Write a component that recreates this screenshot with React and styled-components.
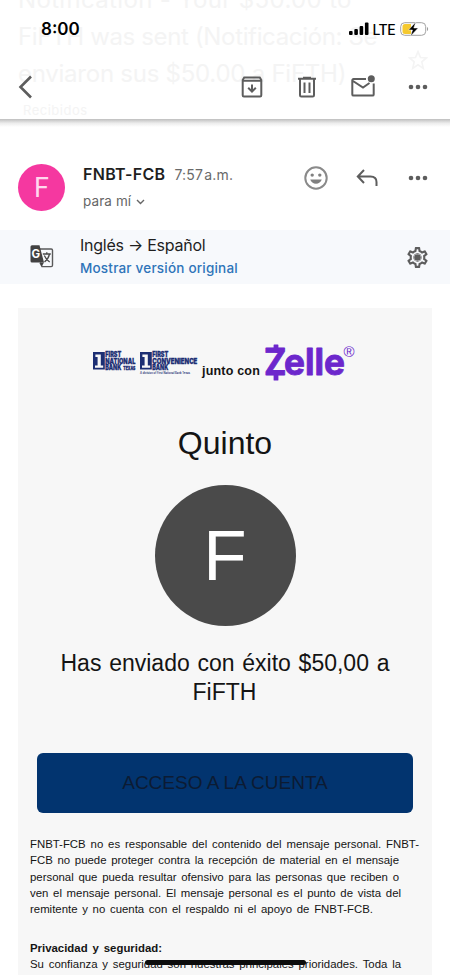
import React from 'react';
import styled, { createGlobalStyle } from 'styled-components';
import { MdOutlineSettings } from 'react-icons/md';

const GlobalStyle = createGlobalStyle`
  * {
    box-sizing: border-box;
  }

  body {
    margin: 0;
    background: #ffffff;
    overflow: hidden;
  }
`;

const Screen = styled.div`
  position: relative;
  display: flex;
  flex-direction: column;
  width: 450px;
  height: 975px;
  overflow: hidden;
  background: #ffffff;
  color: #1f1f1f;
  font-family: Inter, sans-serif;
`;

const Header = styled.header`
  position: relative;
  flex: none;
  height: 120px;
  overflow: hidden;
  border-bottom: 1px solid #c4c4c4;
`;

const HeaderShadow = styled.div`
  flex: none;
  height: 7px;
  background: linear-gradient(#c9c9c9, #ececec 45%, #ffffff);
`;

const Faded = styled.div`
  position: absolute;
  top: -19px;
  left: 18px;
  color: #f4f4f4;
  white-space: nowrap;
`;

const FadedLine = styled.div`
  height: 37px;
  line-height: 37px;
  font-size: 24px;
  letter-spacing: ${({ $spacing }) => $spacing || 0}px;
`;

const FadedLabel = styled.div`
  width: 75px;
  height: 24px;
  margin-top: 8px;
  padding-left: 5px;
  border-bottom: 3px solid #e8e8e8;
  line-height: 21px;
  font-size: 13px;
  letter-spacing: 0.5px;
`;

const FadedStar = styled.svg`
  position: absolute;
  left: 408px;
  top: 50px;
`;

const StatusBar = styled.div`
  position: relative;
  display: flex;
  align-items: center;
  height: 58px;
  padding: 0 21px 0 41px;
  color: #000000;
`;

const Clock = styled.span`
  flex: 1;
  font-size: 17px;
  font-weight: 600;
`;

const Network = styled.span`
  margin: 0 5px 0 4px;
  font-size: 14px;
  letter-spacing: -0.6px;
  font-weight: 500;
`;

const Toolbar = styled.div`
  position: relative;
  display: flex;
  align-items: center;
  height: 58px;
  padding: 0 20px 0 14px;
`;

const Spacer = styled.div`
  flex: 1;
`;

const Actions = styled.div`
  display: flex;
  gap: ${({ $gap }) => $gap}px;
`;

const Sender = styled.section`
  display: flex;
  flex: none;
  height: 103px;
  padding: 34px 20px 0 18px;

  ${Actions} {
    padding-top: 5px;
  }
`;

const Avatar = styled.div`
  width: 47px;
  height: 47px;
  margin-top: 3px;
  border-radius: 50%;
  background: #f538a0;
  color: #ffd9ee;
  font-family: Roboto, sans-serif;
  font-size: 27px;
  line-height: 48px;
  text-align: center;
`;

const SenderInfo = styled.div`
  flex: 1;
  padding-left: 18px;
`;

const SenderName = styled.div`
  height: 26px;
  line-height: 26px;
  font-size: 16px;
  font-weight: 600;
  letter-spacing: 0.3px;
`;

const Time = styled.span`
  margin-left: 9px;
  color: #6a6a6a;
  font-size: 14px;
  font-weight: 400;
  letter-spacing: 0.2px;
  word-spacing: -3px;
`;

const Recipient = styled.div`
  height: 28px;
  line-height: 28px;
  color: #666666;
  font-size: 13.5px;
  letter-spacing: 0.1px;

  svg {
    margin-left: 5px;
  }
`;

const TranslateBar = styled.section`
  display: flex;
  flex: none;
  align-items: center;
  height: 54px;
  padding: 0 20px 0 28px;
  background: #f7f9fc;
`;

const TranslateText = styled.div`
  flex: 1;
  padding-left: 24px;
`;

const Languages = styled.div`
  height: 23px;
  line-height: 23px;
  font-size: 16px;
  letter-spacing: -0.25px;
`;

const OriginalLink = styled.a`
  display: block;
  height: 23px;
  line-height: 23px;
  color: #2e74b9;
  font-size: 13.5px;
  font-weight: 500;
  letter-spacing: 0.2px;
`;

const Message = styled.main`
  flex: 1;
  width: 414px;
  margin: 24px 0 0 18px;
  background: #f7f7f7;
  font-family: 'Liberation Sans', Arial, sans-serif;
  color: #141414;
`;

const Logos = styled.div`
  display: flex;
  height: 115px;
  padding: 36px 0 0 74px;

  svg {
    flex: none;
    overflow: visible;
  }
`;

const Joined = styled.span`
  width: 60px;
  margin: 18px 3px 0 4px;
  font-size: 12.5px;
  font-weight: bold;
  letter-spacing: 0.2px;
  line-height: 18px;
  white-space: nowrap;
`;

const Title = styled.h1`
  height: 62px;
  margin: 0;
  font-size: 32px;
  font-weight: 400;
  line-height: 41px;
  text-align: center;
`;

const Initial = styled.div`
  width: 141px;
  height: 141px;
  margin: 0 auto;
  border-radius: 50%;
  background: #4a4a4a;
  color: #ffffff;
  font-size: 71px;
  line-height: 142px;
  text-align: center;
`;

const Sent = styled.div`
  height: 127px;
  padding-top: 23px;
  font-size: 23px;
  line-height: 28.5px;
`;

const Line = styled.div`
  display: block;
  width: ${({ $width }) => $width}px;
  margin: ${({ $center }) => ($center ? '0 auto' : '0')};
  text-align: justify;
  text-align-last: justify;
  white-space: nowrap;
`;

const AccountButton = styled.button`
  display: block;
  width: 376px;
  height: 60px;
  margin: 0 0 0 19px;
  padding: 0;
  border: none;
  border-radius: 6px;
  background: #02346f;
  color: #0c1b33;
  font: 19px 'Liberation Sans', Arial, sans-serif;
`;

const Legal = styled.div`
  padding: 23px 0 0 12px;
  font-size: 11.4px;
  line-height: 16.25px;
`;

const Privacy = styled.div`
  margin-top: 22.5px;
`;

const HomeIndicator = styled.div`
  position: absolute;
  left: 145px;
  top: 960px;
  width: 161px;
  height: 5px;
  border-radius: 3px;
  background: #0c0c0c;
`;

const SignalIcon = () => (
  <svg width="20" height="14" viewBox="0 0 20 14">
    <rect x="0" y="9" width="3.6" height="4" rx="1" />
    <rect x="5.3" y="7" width="3.6" height="6" rx="1" />
    <rect x="10.6" y="4" width="3.6" height="9" rx="1" />
    <rect x="15.9" y="0.5" width="3.6" height="12.5" rx="1" />
  </svg>
);

const BatteryIcon = () => (
  <svg width="29" height="16" viewBox="0 0 29 16">
    <rect x="0.7" y="1.7" width="25" height="12.6" rx="4" fill="#fff" stroke="#a2a2a2" />
    <path d="M5 3h6v10H5a2.5 2.5 0 0 1-2.5-2.5v-5A2.5 2.5 0 0 1 5 3z" fill="#f5c92f" />
    <path d="M27 6v4c1.5-.6 1.5-3.4 0-4z" fill="#999" />
    <path d="M15.8 1 8.5 9h4l-2 6.2L18.2 7h-4.4z" fill="#000" stroke="#fff" strokeWidth=".5" />
  </svg>
);

const Icon = styled.svg.attrs({ width: 24, height: 24, viewBox: '0 0 24 24' })`
  display: block;
  fill: none;
  stroke: ${({ $color }) => $color || '#5d5d5d'};
  stroke-width: 2;
`;

const DotsIcon = () => (
  <Icon>
    <g fill="#5d5d5d" stroke="none">
      <circle cx="5" cy="12" r="2.3" />
      <circle cx="12" cy="12" r="2.3" />
      <circle cx="19" cy="12" r="2.3" />
    </g>
  </Icon>
);

const BackIcon = () => (
  <Icon>
    <path d="M17 1.500 6.500 12 17 22.500" strokeWidth="2.6" />
  </Icon>
);

const ArchiveIcon = () => (
  <Icon>
    <path d="M4.200 2.500h15.600L21.300 5v15.300a1.200 1.200 0 0 1-1.200 1.200H3.900a1.200 1.200 0 0 1-1.200-1.200V5z" />
    <path d="M3 5.800h18M12 9.500v7M8.200 12.800l3.800 3.800 3.800-3.800" />
  </Icon>
);

const TrashIcon = () => (
  <Icon>
    <path d="M3 3.800h18M8 2.800h8M5 4v16.200a1.300 1.300 0 0 0 1.300 1.300h11.400a1.300 1.300 0 0 0 1.300-1.300V4M9.500 7.500v10.500M14.500 7.500v10.500" />
  </Icon>
);

const MailIcon = () => (
  <Icon>
    <path d="M15 4H2.500A1.200 1.200 0 0 0 1.300 5.200v14.200A1.200 1.200 0 0 0 2.500 20.600h19a1.200 1.200 0 0 0 1.200-1.200V8.500M2 6l10 6.500 6.500-4.500" />
    <circle cx="20.3" cy="3.8" r="3.5" fill="#5d5d5d" stroke="none" />
  </Icon>
);

const SmileIcon = () => (
  <Icon $color="#8a8a8a">
    <circle cx="12" cy="12" r="10.7" />
    <g fill="#808080" stroke="none">
      <circle cx="8.2" cy="9.1" r="1.7" />
      <circle cx="15.8" cy="9.1" r="1.7" />
      <path d="M6.200 13.600h11.600c-.9 2.500-3.100 4.200-5.800 4.200s-4.900-1.700-5.800-4.200z" />
    </g>
  </Icon>
);

const ReplyIcon = () => (
  <Icon>
    <path d="M9 4 2.800 10.500 9 17M3 10.500h12.500c3.800 0 6 2 6 5.500v4" />
  </Icon>
);

const TranslateIcon = () => (
  <svg width="28" height="28" viewBox="0 0 28 28">
    <path d="M12 6h11.200A1.300 1.300 0 0 1 24.500 7.300v15a1.300 1.300 0 0 1-1.300 1.300H14l-2-4" fill="#f7f9fc" stroke="#5a5a5a" strokeWidth="1.4" />
    <path d="M4 2.200h7.500l4.500 17.400H4a1.500 1.500 0 0 1-1.500-1.500V3.700A1.500 1.500 0 0 1 4 2.200z" fill="#424242" />
    <path d="M12 19.600h4l-2.300 4z" fill="#424242" />
    <text x="3.4" y="15" fill="#fff" fontFamily="Inter, sans-serif" fontSize="11.500" fontWeight="700">G</text>
    <path d="M14.800 11h8M18.800 9.300V11M21.500 11c-.7 3.300-2.800 6.200-5 8M16.300 12.500c1 2.400 3 5 5.400 6.500" fill="none" stroke="#4a4a4a" strokeWidth="1.3" />
  </svg>
);

const SettingsIcon = () => (
  <svg width="25" height="25" viewBox="0 0 25 25" color="#5d5d5d">
    <MdOutlineSettings size={25} />
    <circle cx="12.5" cy="12.5" r="3.6" fill="#f7f9fc" />
    <circle cx="12.5" cy="12.5" r="3.3" fill="#5d5d5d" />
  </svg>
);

const BankMark = ({ x }) => (
  <g transform={`translate(${x} 0)`}>
    <rect x="0" y="8" width="11.8" height="17.5" fill="#1c2e73" />
    <path d="M2.400 10.500h5.400v11h2.400v2.200H2v-2.200h2.600v-8.500H2.400z" fill="#f7f7f7" />
  </g>
);

// Both bank names sit beside their numeral mark
const BankLogos = () => (
  <svg width="106" height="36" viewBox="0 0 106 36" fill="#1c2e73" stroke="#1c2e73" strokeWidth="0" fontFamily="Inter, sans-serif" fontWeight="900">
    <BankMark x={1} />
    <g fontSize="7.4" strokeWidth="0.3">
      <text x="13.3" y="13.3" textLength="16" lengthAdjust="spacingAndGlyphs">FIRST</text>
      <text x="13.3" y="19.5" textLength="30" lengthAdjust="spacingAndGlyphs">NATIONAL</text>
      <text x="13.3" y="25.7" textLength="16" lengthAdjust="spacingAndGlyphs">BANK</text>
      <text x="31.3" y="25.6" fontSize="4.6" textLength="12" lengthAdjust="spacingAndGlyphs">TEXAS</text>
    </g>
    <BankMark x={48} />
    <g fontSize="7.4" strokeWidth="0.3">
      <text x="60.3" y="13.3" textLength="16" lengthAdjust="spacingAndGlyphs">FIRST</text>
      <text x="60.3" y="19.5" textLength="45" lengthAdjust="spacingAndGlyphs">CONVENIENCE</text>
      <text x="60.3" y="25.7" textLength="16" lengthAdjust="spacingAndGlyphs">BANK</text>
    </g>
    <text x="48" y="30.3" fontSize="3.2" fontWeight="600" textLength="50" lengthAdjust="spacingAndGlyphs">A division of First National Bank Texas</text>
  </svg>
);

const ZelleLogo = () => (
  <svg width="95" height="40" viewBox="0 0 95 40" fill="#6c27cc" fontFamily="Inter, sans-serif" fontWeight="700">
    <rect x="8.6" y="0.5" width="4.8" height="6" rx="0.6" />
    <rect x="8.6" y="29" width="4.8" height="7.500" rx="0.6" />
    <g fontSize="37" stroke="#6c27cc" strokeWidth="0.9" strokeLinejoin="round">
      <text x="-1" y="31" textLength="22.5" lengthAdjust="spacingAndGlyphs">Z</text>
      <text x="19" y="31" textLength="61" lengthAdjust="spacingAndGlyphs">elle</text>
    </g>
    <text x="78.5" y="13.4" fontFamily="'Liberation Sans', sans-serif" fontSize="15" fontWeight="400">®</text>
  </svg>
);

const legalLines = [
  [389, 'FNBT-FCB no es responsable del contenido del mensaje personal. FNBT-'],
  [369, 'FCB no puede proteger contra la recepción de material en el mensaje'],
  [369, 'personal que pueda resultar ofensivo para las personas que reciben o'],
  [371, 'ven el mensaje personal. El mensaje personal es el punto de vista del'],
  [343, 'remitente y no cuenta con el respaldo ni el apoyo de FNBT-FCB.'],
];

const App = () => {
  return (
    <>
      <GlobalStyle />
      <Screen>
        <Header>
          <Faded>
            <FadedLine $spacing={0.35}>Notification - Your $50.00 to</FadedLine>
            <FadedLine $spacing={-0.35}>FiFTH was sent (Notificación: Se</FadedLine>
            <FadedLine $spacing={-0.25}>enviaron sus $50.00 a FiFTH)</FadedLine>
            <FadedLabel>Recibidos</FadedLabel>
          </Faded>
          <FadedStar width="20" height="20" viewBox="0 0 24 24" fill="none" stroke="#f4f4f4" strokeWidth="2">
            <path d="m12 2 3 7 7 .6-5.400 4.700L18.300 22 12 17.800 5.700 22l1.700-7.700L2 9.600 9 9z" />
          </FadedStar>
          <StatusBar>
            <Clock>8:00</Clock>
            <SignalIcon />
            <Network>LTE</Network>
            <BatteryIcon />
          </StatusBar>
          <Toolbar>
            <BackIcon />
            <Spacer />
            <Actions $gap={31.5}>
              <ArchiveIcon />
              <TrashIcon />
              <MailIcon />
              <DotsIcon />
            </Actions>
          </Toolbar>
        </Header>
        <HeaderShadow />

        <Sender>
          <Avatar>F</Avatar>
          <SenderInfo>
            <SenderName>
              FNBT-FCB<Time>7:57 a.m.</Time>
            </SenderName>
            <Recipient>
              para mí
              <svg width="9" height="7" viewBox="0 0 9 7" fill="none" stroke="#666" strokeWidth="1.4">
                <path d="m1 1 3.500 3.500L8 1" />
              </svg>
            </Recipient>
          </SenderInfo>
          <Actions $gap={27}>
            <SmileIcon />
            <ReplyIcon />
            <DotsIcon />
          </Actions>
        </Sender>

        <TranslateBar>
          <TranslateIcon />
          <TranslateText>
            <Languages>Inglés → Español</Languages>
            <OriginalLink>Mostrar versión original</OriginalLink>
          </TranslateText>
          <SettingsIcon />
        </TranslateBar>

        <Message>
          <Logos>
            <BankLogos />
            <Joined>junto con</Joined>
            <ZelleLogo />
          </Logos>
          <Title>Quinto</Title>
          <Initial>F</Initial>
          <Sent>
            <Line $width={329} $center>Has enviado con éxito $50,00 a</Line>
            <Line $width={65} $center>FiFTH</Line>
          </Sent>
          <AccountButton>ACCESO A LA CUENTA</AccountButton>
          <Legal>
            {legalLines.map(([width, text]) => (
              <Line key={text} $width={width}>{text}</Line>
            ))}
            <Privacy>
              <Line as="b" $width={132}>Privacidad y seguridad:</Line>
              <Line $width={371}>Su confianza y seguridad son nuestras principales prioridades. Toda la</Line>
            </Privacy>
          </Legal>
        </Message>
        <HomeIndicator />
      </Screen>
    </>
  );
};

export default App;
